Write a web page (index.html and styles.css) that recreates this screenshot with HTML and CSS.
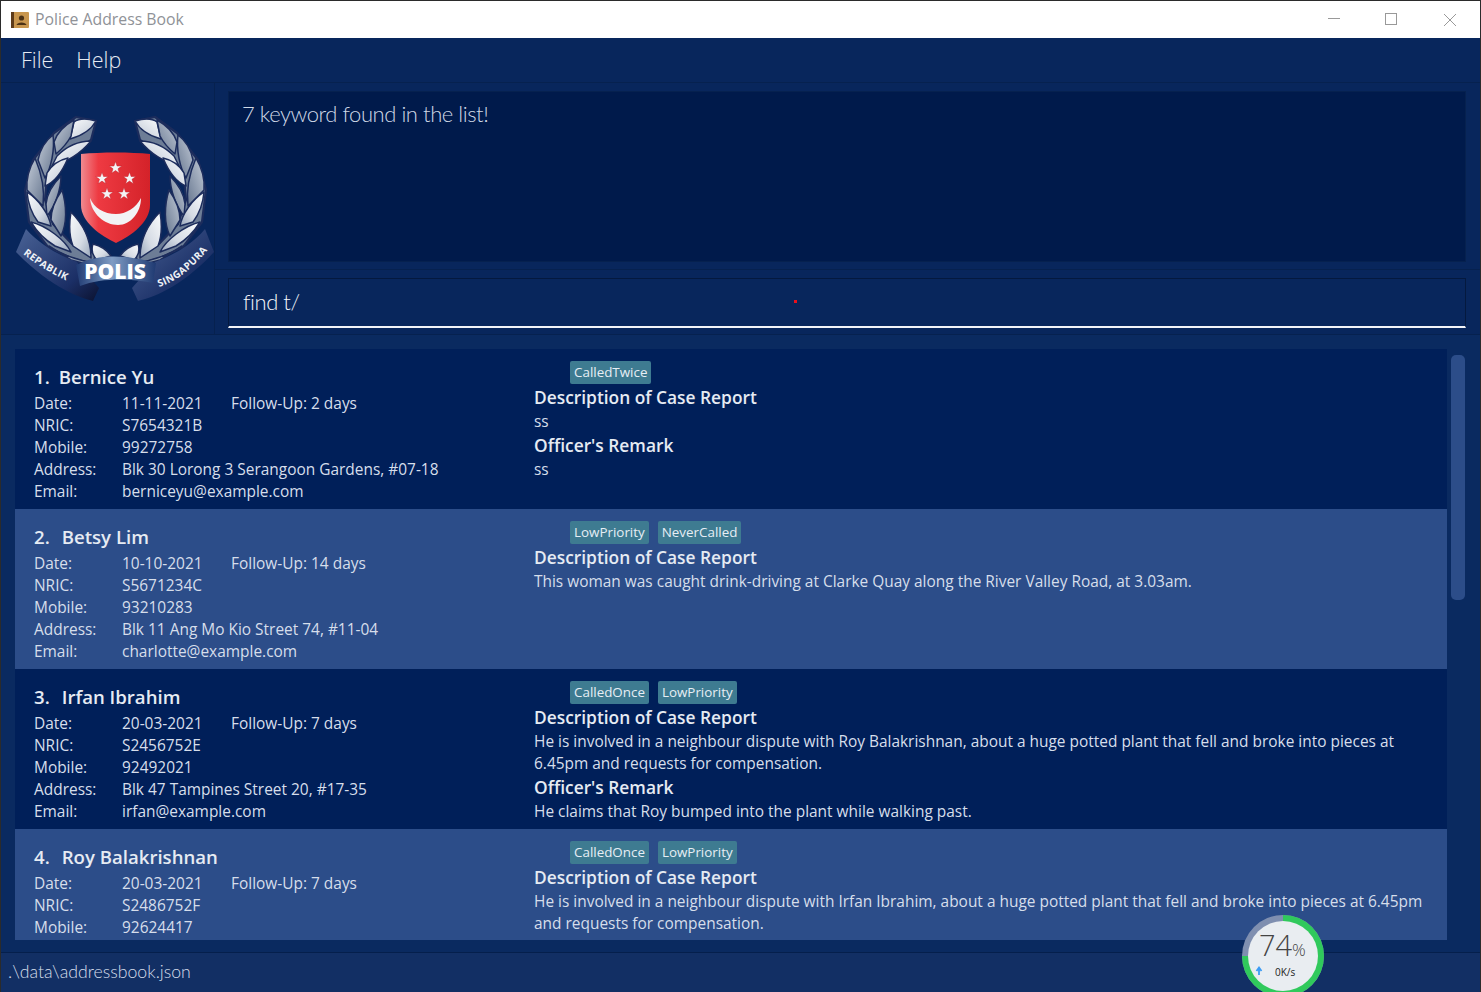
FILE: index.html
```html
<!DOCTYPE html>
<html lang="en">
<head>
<meta charset="utf-8">
<title>Police Address Book</title>
<link rel="stylesheet" href="styles.css">
</head>
<body>
<div class="window">
  <header class="titlebar">
    <svg class="app-icon" width="18" height="16" viewBox="0 0 18 16"><rect width="18" height="16" rx="1" fill="#c8964e"/><rect width="3" height="16" fill="#5d3b1a"/><circle cx="10.5" cy="6" r="2.6" fill="#4a3115"/><path d="M5.500 13 C6 9.500 15 9.500 15.500 13Z" fill="#4a3115"/></svg>
    <span class="app-title">Police Address Book</span>
    <div class="win-controls">
      <svg width="14" height="14" viewBox="0 0 14 14"><path d="M1 5.500H13" stroke="#999" fill="none"/></svg>
      <svg width="14" height="14" viewBox="0 0 14 14"><rect x=".5" y=".5" width="11" height="11" stroke="#999" fill="none"/></svg>
      <svg width="14" height="14" viewBox="0 0 14 14"><path d="M1 1L13 13M13 1L1 13" stroke="#999" fill="none"/></svg>
    </div>
  </header>
  <nav class="menubar"><span>File</span><span>Help</span></nav>
  <section class="top">
    <div class="logo-panel">
      <svg class="logo" width="214" height="253" viewBox="0 82 214 253">
        <defs>
          <linearGradient id="silver" x1="0" y1="0" x2="1" y2="1"><stop offset="0" stop-color="#fbfcfd"/><stop offset=".6" stop-color="#d5dbe4"/><stop offset="1" stop-color="#97a5ba"/></linearGradient>
          <linearGradient id="steel" x1="0" y1="0" x2="1" y2="1"><stop offset="0" stop-color="#c4ccd8"/><stop offset="1" stop-color="#66768f"/></linearGradient>
          <linearGradient id="red" x1="0" y1="0" x2="1" y2="0"><stop offset="0" stop-color="#f08a90"/><stop offset=".25" stop-color="#ee3a42"/><stop offset="1" stop-color="#d42229"/></linearGradient>
          <linearGradient id="banner" x1="0" y1="0" x2="1" y2="0"><stop offset="0" stop-color="#1f3a72"/><stop offset=".45" stop-color="#7f9cc4"/><stop offset="1" stop-color="#1f3a72"/></linearGradient>
          <linearGradient id="ribbon" x1="0" y1="0" x2="1" y2="1"><stop offset="0" stop-color="#4a6396"/><stop offset=".7" stop-color="#1b2f66"/><stop offset="1" stop-color="#0b1230"/></linearGradient>
          <g id="wreath" stroke="#1c2c5c" stroke-width="1.500" stroke-linejoin="round">
            <path d="M75 117L95 121L90 140L67 157L46 178L44 200L52 224L72 245L95 254L92 264L70 258L47 247L28 222L24 190L32 160L43 146L53 133Z" fill="#6d7d96" stroke-width="2.200"/>
            <path fill="url(#silver)" d="M95 121C85 118 77 119 73 122L69 139C80 136 90 130 95 121Z"/>
            <path fill="url(#steel)" d="M73 120C62 126 56 133 53 142L55 154C62 148 68 140 70 136Z"/>
            <path fill="url(#silver)" d="M90 141C78 141 66 146 56 156L51 166C66 162 80 153 90 141Z"/>
            <path fill="url(#steel)" d="M52 135C44 141 39 150 37 160L44 178C50 168 54 150 52 135Z"/>
            <path fill="url(#silver)" d="M67 158C58 160 50 166 46 173L44 186C54 182 62 170 67 158Z"/>
            <path fill="url(#steel)" d="M34 158C28 168 25 178 26 190L42 206C44 190 40 172 34 158Z"/>
            <path fill="url(#steel)" d="M60 176C50 186 46 194 45 204L46 216C54 206 60 190 60 176Z"/>
            <path fill="url(#silver)" d="M26 192C27 204 31 214 37 222L50 226C48 214 38 200 26 192Z"/>
            <path fill="url(#steel)" d="M61 190C54 200 50 210 50 220L60 236C66 224 66 206 61 190Z"/>
            <path fill="url(#silver)" d="M30 222C36 232 44 240 54 246L70 252C64 240 46 226 30 222Z"/>
            <path fill="url(#silver)" d="M70 212C68 224 68 236 72 246L90 258C90 240 82 224 70 212Z"/>
            <path fill="url(#steel)" d="M48 246C58 254 70 258 88 262L92 266L70 260Z"/>
            <path fill="url(#silver)" d="M92 244C90 250 92 256 96 260L110 256C106 250 100 246 92 244Z"/>
          </g>
          <polygon id="star" points="0,-6.500 1.600,-2 6.300,-2 2.500,.8 3.900,5.300 0,2.600 -3.900,5.300 -2.500,.8 -6.300,-2 -1.600,-2" fill="#f4f4f6" stroke="#c8202a" stroke-width=".5"/>
          <path id="arcL" d="M22 254C40 268 58 278 78 286"/>
          <path id="arcR" d="M158 287C180 280 198 262 216 238"/>
        </defs>
        <use href="#wreath"/>
        <use href="#wreath" transform="translate(229 0) scale(-1 1)"/>
        <path d="M80 154C100 152 130 152 149 154V205C149 222 130 236 115 243C100 236 80 222 80 205Z" fill="url(#red)"/>
        <use href="#star" x="114.500" y="168"/>
        <use href="#star" x="101" y="178.500"/>
        <use href="#star" x="128.500" y="178.500"/>
        <use href="#star" x="106" y="194"/>
        <use href="#star" x="123" y="194"/>
        <path d="M89 198C90 214 104 225 117 225C130 225 140 212 140 198C135 208 125 214 115 214C103 214 93 208 89 198Z" fill="#f2f2f4"/>
        <path d="M25 229C40 246 60 256 76 262L98 288L92 301C80 298 50 288 15 252Z" fill="url(#ribbon)"/>
        <path d="M204 229C190 246 170 256 154 262L131 288L137 301C150 298 180 288 213 252Z" fill="url(#ribbon)"/>
        <path d="M75 265C100 252 130 256 155 263L152 283C128 278 100 278 79 286Z" fill="url(#banner)"/>
        <text class="logo-small"><textPath href="#arcL">REPABLIK</textPath></text>
        <text class="logo-small"><textPath href="#arcR">SINGAPURA</textPath></text>
        <text class="logo-polis" x="114" y="279" text-anchor="middle">POLIS</text>
      </svg>
    </div>
    <div class="console">
      <div class="result-panel"><div class="result-box">7 keyword found in the list!</div></div>
      <div class="command-panel"><div class="command-box">find t/<i class="red-dot"></i></div></div>
    </div>
  </section>
  <main class="list-pane">
    <div class="list">
      <article class="card">
        <div class="who">
          <div class="name"><span class="num tight">1.</span>Bernice Yu</div>
          <div class="field"><span>Date:</span><span>11-11-2021</span><span class="follow">Follow-Up: 2 days</span></div>
          <div class="field"><span>NRIC:</span><span>S7654321B</span></div>
          <div class="field"><span>Mobile:</span><span>99272758</span></div>
          <div class="field"><span>Address:</span><span>Blk 30 Lorong 3 Serangoon Gardens, #07-18</span></div>
          <div class="field"><span>Email:</span><span>berniceyu@example.com</span></div>
        </div>
        <div class="case">
          <div class="tags"><span>CalledTwice</span></div>
          <h3>Description of Case Report</h3><p>ss</p>
          <h3>Officer's Remark</h3><p>ss</p>
        </div>
      </article>
      <article class="card alt">
        <div class="who">
          <div class="name"><span class="num">2.</span>Betsy Lim</div>
          <div class="field"><span>Date:</span><span>10-10-2021</span><span class="follow">Follow-Up: 14 days</span></div>
          <div class="field"><span>NRIC:</span><span>S5671234C</span></div>
          <div class="field"><span>Mobile:</span><span>93210283</span></div>
          <div class="field"><span>Address:</span><span>Blk 11 Ang Mo Kio Street 74, #11-04</span></div>
          <div class="field"><span>Email:</span><span>charlotte@example.com</span></div>
        </div>
        <div class="case">
          <div class="tags"><span>LowPriority</span><span>NeverCalled</span></div>
          <h3>Description of Case Report</h3>
          <p>This woman was caught drink-driving at Clarke Quay along the River Valley Road, at 3.03am.</p>
        </div>
      </article>
      <article class="card">
        <div class="who">
          <div class="name"><span class="num">3.</span>Irfan Ibrahim</div>
          <div class="field"><span>Date:</span><span>20-03-2021</span><span class="follow">Follow-Up: 7 days</span></div>
          <div class="field"><span>NRIC:</span><span>S2456752E</span></div>
          <div class="field"><span>Mobile:</span><span>92492021</span></div>
          <div class="field"><span>Address:</span><span>Blk 47 Tampines Street 20, #17-35</span></div>
          <div class="field"><span>Email:</span><span>irfan@example.com</span></div>
        </div>
        <div class="case">
          <div class="tags"><span>CalledOnce</span><span>LowPriority</span></div>
          <h3>Description of Case Report</h3>
          <p>He is involved in a neighbour dispute with Roy Balakrishnan, about a huge potted plant that fell and broke into pieces at<br>6.45pm and requests for compensation.</p>
          <h3>Officer's Remark</h3>
          <p>He claims that Roy bumped into the plant while walking past.</p>
        </div>
      </article>
      <article class="card alt">
        <div class="who">
          <div class="name"><span class="num">4.</span>Roy Balakrishnan</div>
          <div class="field"><span>Date:</span><span>20-03-2021</span><span class="follow">Follow-Up: 7 days</span></div>
          <div class="field"><span>NRIC:</span><span>S2486752F</span></div>
          <div class="field"><span>Mobile:</span><span>92624417</span></div>
        </div>
        <div class="case">
          <div class="tags"><span>CalledOnce</span><span>LowPriority</span></div>
          <h3>Description of Case Report</h3>
          <p>He is involved in a neighbour dispute with Irfan Ibrahim, about a huge potted plant that fell and broke into pieces at 6.45pm<br>and requests for compensation.</p>
        </div>
      </article>
    </div>
    <div class="scrollbar"><div class="thumb"></div></div>
  </main>
  <footer class="statusbar">.\data\addressbook.json</footer>
  <div class="gauge">
    <svg width="84" height="84" viewBox="0 0 84 84">
      <circle cx="42" cy="42" r="41" fill="#7f8fb0"/>
      <path d="M42 1A41 41 0 1 1 1 42L42 42Z" fill="#30c95c"/>
      <circle cx="42" cy="42" r="35" fill="#e9edf1"/>
      <path d="M18 61V54M15.500 57L18 53.500L20.500 57" stroke="#3c9cf5" stroke-width="1.800" fill="none"/>
    </svg>
    <span class="gauge-num">74<small>%</small></span>
    <span class="gauge-rate">0K/s</span>
  </div>
</div>
</body>
</html>
```
FILE: styles.css
```css
* { box-sizing: border-box; }
html, body { margin: 0; padding: 0; }
body { width: 1481px; height: 992px; overflow: hidden; font-family: "Open Sans", "Noto Sans", sans-serif; }
.window { position: relative; width: 1481px; height: 992px; display: flex; flex-direction: column; background: #08265c; border: 1px solid #2b2b2b; border-bottom: 0; overflow: hidden; }
.titlebar { height: 37px; flex: none; background: #fff; display: flex; align-items: center; padding-left: 10px; }
.app-icon { margin-right: 6px; }
.app-title { font-size: 15.800px; color: #8f9297; margin-top: -2px; }
.win-controls { margin-left: auto; display: flex; gap: 44px; padding-right: 23px; }
.menubar { height: 44px; flex: none; display: flex; gap: 23px; align-items: center; padding: 0 0 2px 20px; font-size: 21.500px; font-weight: 300; color: #e6ebf3; }
.top { height: 253px; flex: none; display: flex; border-top: 1px solid #06214f; border-bottom: 1px solid #06214f; }
.logo-panel { width: 213px; flex: none; }
.logo { display: block; margin-top: -1px; }
.logo-small { font-family: "Open Sans", sans-serif; font-size: 10px; font-weight: 700; fill: #eef1f6; letter-spacing: .4px; }
.logo-polis { font-family: "Open Sans", sans-serif; font-size: 21px; font-weight: 800; fill: #fff; }
.console { flex: 1; display: flex; flex-direction: column; border-left: 1px solid #06214f; }
.result-panel { height: 187px; padding: 8px 14px 7px 13px; border-bottom: 1px solid #06214f; }
.result-box { height: 100%; background: #001a4b; border: 1px solid #06214f; padding: 5px 13px; font-family: "Lato", sans-serif; font-size: 22px; letter-spacing: -.45px; font-weight: 300; color: #cfd8e6; line-height: 34px; }
.command-panel { flex: 1; padding: 8px 14px 6px 13px; }
.command-box { position: relative; height: 50px; border: 1px solid #04193f; border-bottom: 2px solid #f2f4f8; padding: 5px 14px; font-family: "Lato", sans-serif; font-size: 22px; letter-spacing: -.45px; font-weight: 300; color: #f2f4f8; line-height: 36px; }
.red-dot { position: absolute; left: 565px; top: 21px; width: 3px; height: 3px; background: #e8101c; }
.list-pane { flex: 1; min-height: 0; display: flex; padding: 14px 14px 12px 14px; border-bottom: 1px solid #051f4c; background: #0a2a60; }
.list { width: 1432px; flex: none; overflow: hidden; }
.card { height: 160px; display: flex; background: #001f59; color: #d6deeb; font-size: 15.450px; line-height: 22px; }
.card.alt { background: #2c4d89; }
.who { width: 519px; flex: none; padding: 15px 0 0 19px; }
.name { font-size: 18.600px; font-weight: 600; color: #e6ebf3; line-height: 26px; margin-bottom: 2px; }
.num { margin-right: 12px; }
.num.tight { margin-right: 9px; }
.field { display: flex; }
.field span:first-child { width: 88px; flex: none; }
.field span:nth-child(2) { width: 109px; flex: none; white-space: nowrap; }
.follow { white-space: nowrap; }
.case { flex: 1; padding-top: 12px; }
.tags { display: flex; gap: 9px; padding-left: 36px; height: 24px; }
.tags span { height: 23px; padding: 0 4px; background: #3e7b91; border-radius: 2px; font-size: 13.400px; line-height: 23px; color: #e6eef5; }
.case h3 { margin: 0; font-size: 17.350px; font-weight: 600; line-height: 25px; color: #e6ebf3; }
.case p { margin: 0 0 1px; }
.scrollbar { flex: 1; padding: 6px 0 0 4px; }
.thumb { width: 14px; height: 245px; background: #2c4d89; border-radius: 5px; }
.statusbar { height: 39px; flex: none; background: #122f64; padding: 0 0 0 7px; font-family: "Lato", sans-serif; font-size: 17.700px; font-weight: 300; line-height: 38px; color: #d6deeb; }
.gauge { position: absolute; left: 1240px; top: 913px; width: 84px; height: 84px; }
.gauge svg { display: block; }
.gauge-num { position: absolute; left: 18px; top: 12px; font-size: 29px; font-weight: 300; line-height: 38px; color: #444; }
.gauge-num small { font-size: 17px; }
.gauge-rate { position: absolute; left: 34px; top: 51px; font-size: 10px; line-height: 14px; color: #222; }
```
